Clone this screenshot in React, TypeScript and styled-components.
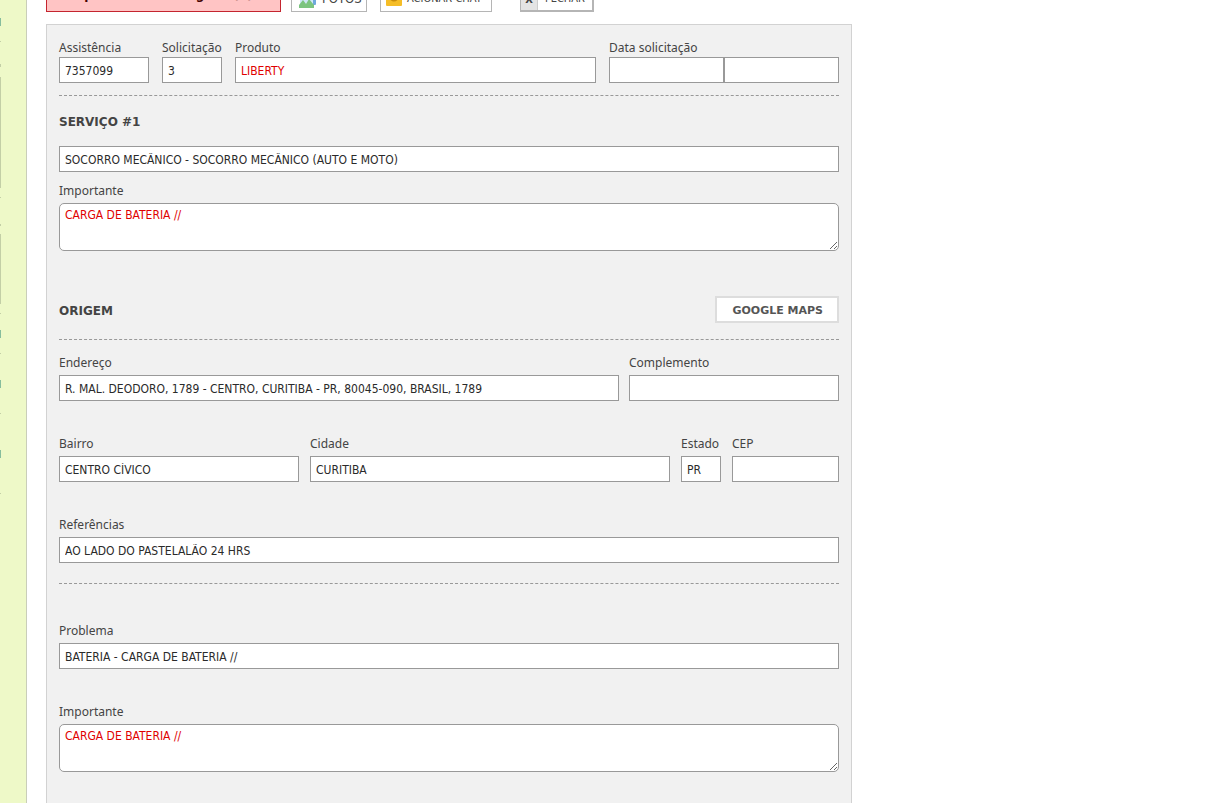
import React, { useId } from 'react';
import styled, { createGlobalStyle } from 'styled-components';

const Global = createGlobalStyle`
  *, *::before, *::after { box-sizing: border-box; }
  html { overflow-x: hidden; }
  body {
    margin: 0;
    background: #fff;
    color: #444;
    font: 12px/16px "DejaVu Sans Condensed", "Noto Sans", sans-serif;
  }
  input, textarea, button { font: inherit; margin: 0; }
`;

const Page = styled.div`
  display: flex;
  min-height: 100vh;
`;

const Rail = styled.aside`
  flex: none;
  width: 27px;
  overflow: hidden;
  background: #eef9c8;
  border-right: 1px solid #c9ceb9;
`;

const Mark = styled.div<{ $top: number; $height: number; $tone?: string }>`
  width: 1px;
  height: ${(p) => p.$height}px;
  margin-top: ${(p) => p.$top}px;
  background: ${(p) => p.$tone ?? '#c3cfa6'};
`;

const Content = styled.main`
  flex: 1;
  min-width: 0;
  max-width: 825px;
  padding-left: 19px;
  display: flex;
  flex-direction: column;
  gap: 12px;
`;

const Toolbar = styled.div`
  display: flex;
  align-items: flex-end;
  height: 12px;
  overflow: hidden;
`;

const Notice = styled.div`
  flex: none;
  width: 235px;
  height: 34px;
  padding: 8px 10px;
  background: #ffc4c4;
  border: 1px solid #c4252f;
  color: #400;
  font-family: "DejaVu Sans", sans-serif;
  font-weight: bold;
  font-size: 12px;
  white-space: nowrap;
`;

const ToolButton = styled.button<{ $width: number; $gap: number; $size?: number }>`
  flex: none;
  display: flex;
  align-items: center;
  gap: 5px;
  width: ${(p) => p.$width}px;
  height: 28px;
  margin-left: ${(p) => p.$gap}px;
  padding: 2px 0 0 5px;
  background: #fff;
  border: 1px solid #b5b5b5;
  color: #444;
  font-size: ${(p) => p.$size ?? 11}px;
  white-space: nowrap;
`;

const CloseButton = styled(ToolButton)`
  gap: 7px;
  padding: 2px 0 0;
  border-width: 1px 2px 2px 1px;
`;

const CloseMark = styled.span`
  align-self: stretch;
  width: 17px;
  padding-top: 5px;
  background: #e4e4e4;
  border-right: 1px solid #ccc;
  font-weight: bold;
  text-align: center;
`;

const Panel = styled.form`
  flex: 1;
  padding: 15px 12px 31px;
  background: #f1f1f1;
  border: 1px solid #d2d2d2;
  border-bottom: 0;
`;

const Row = styled.div<{ $cols: string; $gap: number; $top?: number }>`
  display: grid;
  grid-template-columns: ${(p) => p.$cols};
  gap: ${(p) => p.$gap}px;
  margin-top: ${(p) => p.$top ?? 0}px;
`;

const FieldBox = styled.div<{ $top?: number; $tight?: boolean }>`
  display: flex;
  flex-direction: column;
  gap: ${(p) => (p.$tight ? 1 : 4)}px;
  min-width: 0;
  margin-top: ${(p) => p.$top ?? 0}px;
`;

const Label = styled.label`
  font-family: "Noto Sans", sans-serif;
  white-space: nowrap;
`;

const Input = styled.input<{ $alert?: boolean }>`
  display: block;
  width: 100%;
  min-width: 0;
  height: 26px;
  padding: 1px 5px 0;
  background: #fff;
  border: 1px solid #999;
  border-radius: 0;
  color: ${(p) => (p.$alert ? '#e00000' : '#2a2a2a')};
`;

const Area = styled.textarea`
  display: block;
  width: 100%;
  height: 48px;
  padding: 3px 5px;
  background: #fff;
  border: 1px solid #999;
  border-radius: 5px;
  color: #e00000;
  resize: vertical;
`;

const Pair = styled.div`
  display: grid;
  grid-template-columns: 1fr 1fr;
`;

const Divider = styled.hr<{ $top: number; $bottom: number }>`
  height: 0;
  margin: ${(p) => p.$top}px 0 ${(p) => p.$bottom}px;
  border: 0;
  border-top: 1px dashed #999;
`;

const Title = styled.h2`
  margin: 0;
  padding-top: 2px;
  font: bold 12px/16px "DejaVu Sans", sans-serif;
`;

const SectionHead = styled.div`
  display: flex;
  align-items: center;
  justify-content: space-between;
  margin-top: 45px;
`;

const MapsButton = styled.button`
  height: 27px;
  padding: 2px 14px 0 15px;
  background: #fff;
  border: 2px solid #ddd;
  color: #555;
  font: bold 11px/16px "DejaVu Sans", sans-serif;
`;

const ServiceInput = styled(Input)`
  margin-top: 16px;
`;

type FieldProps = {
  label: string;
  value?: string;
  top?: number;
  tight?: boolean;
  alert?: boolean;
  multiline?: boolean;
};

function Field({ label, value = '', top, tight, alert, multiline }: FieldProps) {
  const id = useId();
  return (
    <FieldBox $top={top} $tight={tight}>
      <Label htmlFor={id}>{label}</Label>
      {multiline ? (
        <Area id={id} defaultValue={value} />
      ) : (
        <Input id={id} defaultValue={value} $alert={alert} />
      )}
    </FieldBox>
  );
}

function DateField() {
  const id = useId();
  return (
    <FieldBox $tight>
      <Label htmlFor={id}>Data solicitação</Label>
      <Pair>
        <Input id={id} />
        <Input aria-label="Hora solicitação" />
      </Pair>
    </FieldBox>
  );
}

const PhotosIcon = () => (
  <svg width="20" height="18" viewBox="0 0 20 18" aria-hidden="true">
    <rect x="6" y="0" width="13" height="15" rx="1" fill="#6fa8dc" />
    <rect x="3" y="2" width="13" height="15" fill="#cfe6f7" />
    <path d="M2 18 V15 L6 10 L9 14 L12 9 L17 15 V18 Z" fill="#7cc47f" />
  </svg>
);

const ChatIcon = () => (
  <svg width="16" height="16" viewBox="0 0 16 16" aria-hidden="true">
    <rect width="16" height="15" rx="1" fill="#f5bd27" />
    <path d="M4 7 Q8 12 12 7" fill="none" stroke="#c98d0c" strokeWidth="2" />
  </svg>
);

const marks = [
  { top: 18, height: 8, tone: '#86bd9d' },
  { top: 15, height: 1 },
  { top: 22, height: 3 },
  { top: 10, height: 111 },
  { top: 9, height: 1 },
  { top: 26, height: 2 },
  { top: 8, height: 70 },
  { top: 9, height: 1 },
  { top: 16, height: 8, tone: '#86bd9d' },
  { top: 15, height: 1 },
  { top: 26, height: 8, tone: '#86bd9d' },
  { top: 25, height: 1 },
  { top: 36, height: 8, tone: '#86bd9d' },
  { top: 35, height: 1 },
];

export default function App() {
  return (
    <Page>
      <Global />
      <Rail>
        {marks.map((m, i) => (
          <Mark key={i} $top={m.top} $height={m.height} $tone={m.tone} />
        ))}
      </Rail>
      <Content>
        <Toolbar>
          <Notice>Tempo estimado chegada (1)</Notice>
          <ToolButton type="button" $width={76} $gap={10} $size={13}>
            <PhotosIcon />
            FOTOS
          </ToolButton>
          <ToolButton type="button" $width={112} $gap={13}>
            <ChatIcon />
            ACIONAR CHAT
          </ToolButton>
          <CloseButton type="button" $width={74} $gap={28}>
            <CloseMark>X</CloseMark>
            FECHAR
          </CloseButton>
        </Toolbar>
        <Panel>
          <Row $cols="90px 60px minmax(0, 1fr) 230px" $gap={13}>
            <Field label="Assistência" value="7357099" tight />
            <Field label="Solicitação" value="3" tight />
            <Field label="Produto" value="LIBERTY" tight alert />
            <DateField />
          </Row>
          <Divider $top={12} $bottom={16} />
          <Title id="servico">SERVIÇO #1</Title>
          <ServiceInput
            aria-labelledby="servico"
            defaultValue="SOCORRO MECÂNICO - SOCORRO MECÂNICO (AUTO E MOTO)"
          />
          <Field label="Importante" value="CARGA DE BATERIA //" top={11} multiline />
          <SectionHead>
            <Title>ORIGEM</Title>
            <MapsButton type="button">GOOGLE MAPS</MapsButton>
          </SectionHead>
          <Divider $top={16} $bottom={15} />
          <Row $cols="minmax(0, 1fr) 210px" $gap={10}>
            <Field
              label="Endereço"
              value="R. MAL. DEODORO, 1789 - CENTRO, CURITIBA - PR, 80045-090, BRASIL, 1789"
            />
            <Field label="Complemento" />
          </Row>
          <Row $cols="240px minmax(0, 1fr) 40px 107px" $gap={11} $top={35}>
            <Field label="Bairro" value="CENTRO CÍVICO" />
            <Field label="Cidade" value="CURITIBA" />
            <Field label="Estado" value="PR" />
            <Field label="CEP" />
          </Row>
          <Field label="Referências" value="AO LADO DO PASTELALÃO 24 HRS" top={35} />
          <Divider $top={20} $bottom={39} />
          <Field label="Problema" value="BATERIA - CARGA DE BATERIA //" />
          <Field label="Importante" value="CARGA DE BATERIA //" top={35} multiline />
        </Panel>
      </Content>
    </Page>
  );
}
